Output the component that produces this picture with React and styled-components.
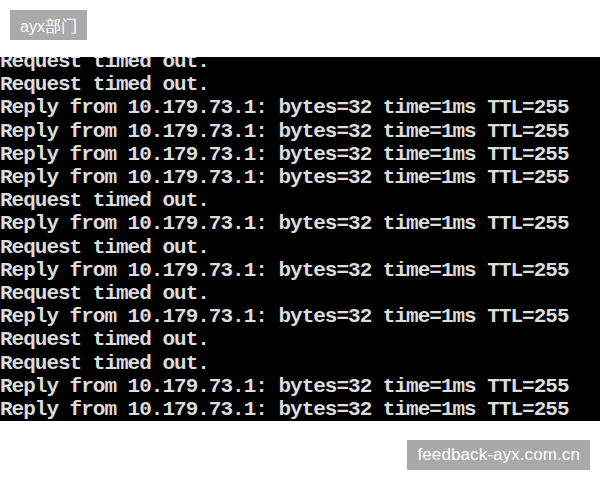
import React from 'react';
import styled, { createGlobalStyle } from 'styled-components';

const GlobalStyle = createGlobalStyle`
  html, body {
    margin: 0;
    padding: 0;
    background: #fff;
  }
`;

const Page = styled.div`
  width: 600px;
  height: 480px;
  display: flex;
  flex-direction: column;
  overflow: hidden;
`;

const Tag = styled.div`
  align-self: ${(p) => (p.$right ? 'flex-end' : 'flex-start')};
  margin: ${(p) => (p.$right ? '19px 10px 0 0' : '10px 0 0 10px')};
  height: 30px;
  padding: 0 ${(p) => (p.$right ? '10px' : '10px')};
  display: flex;
  align-items: center;
  background: #a9a9a9;
  color: #fff;
  font-family: 'Liberation Sans', 'Noto Sans CJK SC', sans-serif;
  font-size: ${(p) => (p.$right ? '17px' : '16px')};
  letter-spacing: ${(p) => (p.$right ? '0.1px' : '0')};
`;

const Console = styled.div`
  margin-top: 17px;
  height: 364px;
  background: #000;
  overflow: hidden;
`;

const Lines = styled.div`
  margin-top: -7px;
  font-family: 'Liberation Mono', monospace;
  font-weight: bold;
  font-size: 21px;
  letter-spacing: -1px;
  line-height: 23.2px;
  color: #dcdcdc;
  white-space: pre;
`;

const timeout = 'Request timed out.';
const reply = 'Reply from 10.179.73.1: bytes=32 time=1ms TTL=255';

const output = [
  timeout, timeout, reply, reply, reply, reply, timeout, reply,
  timeout, reply, timeout, reply, timeout, timeout, reply, reply,
];

const App = () => (
  <>
    <GlobalStyle />
    <Page>
      <Tag>ayx部门</Tag>
      <Console>
        <Lines>
          {output.map((line, i) => (
            <div key={i}>{line}</div>
          ))}
        </Lines>
      </Console>
      <Tag $right>feedback-ayx.com.cn</Tag>
    </Page>
  </>
);

export default App;
